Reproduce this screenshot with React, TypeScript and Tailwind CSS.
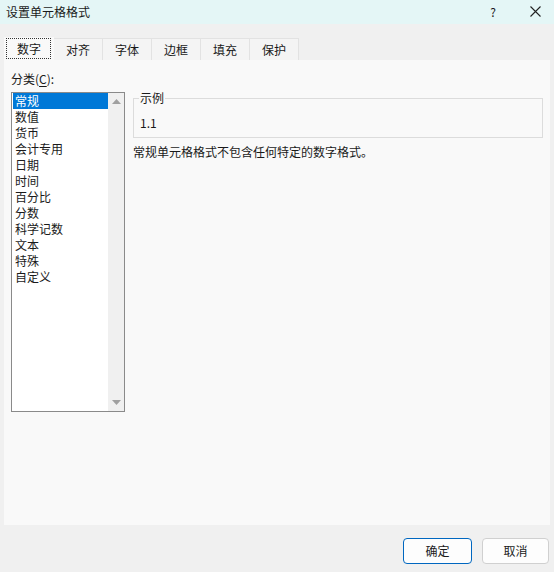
// 设置单元格格式 — 数字页

const font = "font-['Microsoft_YaHei','Noto_Sans_CJK_SC',sans-serif]"

const tabs = ['数字', '对齐', '字体', '边框', '填充', '保护']

const categories = [
  '常规',
  '数值',
  '货币',
  '会计专用',
  '日期',
  '时间',
  '百分比',
  '分数',
  '科学记数',
  '文本',
  '特殊',
  '自定义',
]

function TitleBar() {
  return (
    <div className="flex h-[24px] items-center bg-[#e4f6f6] pb-[1px] pl-[6px] pr-[12px] text-[12px] text-[#1a1a1a]">
      <span className="flex-1">设置单元格格式</span>
      <span className="mr-[34px] text-[12px]">?</span>
      <svg width="11" height="11" viewBox="0 0 11 11" className="mr-[1px]">
        <path d="M0.5 0.5 L10.5 10.5 M10.5 0.5 L0.5 10.5" stroke="#222" strokeWidth="1.1" />
      </svg>
    </div>
  )
}

function Tabs() {
  return (
    <div className="mt-[13px] flex h-[23px] pl-[4px]">
      {tabs.map((tab, i) =>
        i === 0 ? (
          <div
            key={tab}
            className="relative z-10 -mb-[1px] flex h-[24px] w-[50px] items-center justify-center bg-[#f9f9f9]"
          >
            <div className="absolute left-[2px] right-[3px] top-[1px] bottom-[2px] border border-dotted border-[#333]" />
            <span>{tab}</span>
          </div>
        ) : (
          <div
            key={tab}
            className="mt-[1px] flex h-[22px] w-[49px] items-center justify-center border border-b-0 border-l-0 border-[#e2e2e2] bg-[#f4f4f4]"
          >
            {tab}
          </div>
        ),
      )}
    </div>
  )
}

function ScrollArrow({ down }: { down?: boolean }) {
  return (
    <svg width="9" height="5" viewBox="0 0 9 5">
      <path d={down ? 'M0 0 H9 L4.5 5 Z' : 'M0 5 H9 L4.5 0 Z'} fill="#a0a0a0" />
    </svg>
  )
}

function CategoryList() {
  return (
    <div className="flex h-[320px] w-[114px] border border-[#8a8a8a] bg-white">
      <ul className="flex-1 pl-[1px]">
        {categories.map((c, i) => (
          <li
            key={c}
            className={
              'h-[16px] pl-[2px] leading-[16px] ' + (i === 0 ? 'bg-[#0078d7] text-white' : 'text-[#1a1a1a]')
            }
          >
            {c}
          </li>
        ))}
      </ul>
      <div className="flex w-[16px] flex-col items-center justify-between bg-[#f0f0f0] py-[6px]">
        <ScrollArrow />
        <ScrollArrow down />
      </div>
    </div>
  )
}

export default function App() {
  return (
    <div className={`${font} h-[572px] w-[554px] bg-[#f0f0f0] text-[12px] leading-[16px] text-[#1a1a1a]`}>
      <TitleBar />
      <Tabs />
      <div className="mx-[4px] flex h-[465px] gap-[8px] bg-[#f9f9f9] pl-[7px] pr-[7px] pt-[11px]">
        <div className="flex flex-col">
          <div className="mb-[5px] h-[16px]">
            分类(<span className="underline underline-offset-2">C</span>):
          </div>
          <CategoryList />
        </div>
        <div className="flex flex-1 flex-col pt-[20px]">
          <fieldset className="h-[47px] border border-[#dcdcdc] px-[6px] pt-0">
            <legend className="-ml-[1px] px-[1px] leading-[14px]">示例</legend>
            <div className="pt-[10px] leading-[16px]">1.1</div>
          </fieldset>
          <p className="mt-[6px]">常规单元格格式不包含任何特定的数字格式。</p>
        </div>
      </div>
      <div className="mt-[13px] flex justify-end gap-[10px] pr-[5px]">
        <button className="h-[26px] w-[69px] rounded-[4px] border border-[#0067c0] bg-[#fdfdfd]">确定</button>
        <button className="h-[26px] w-[67px] rounded-[4px] border border-[#d0d0d0] bg-[#fdfdfd]">取消</button>
      </div>
    </div>
  )
}
